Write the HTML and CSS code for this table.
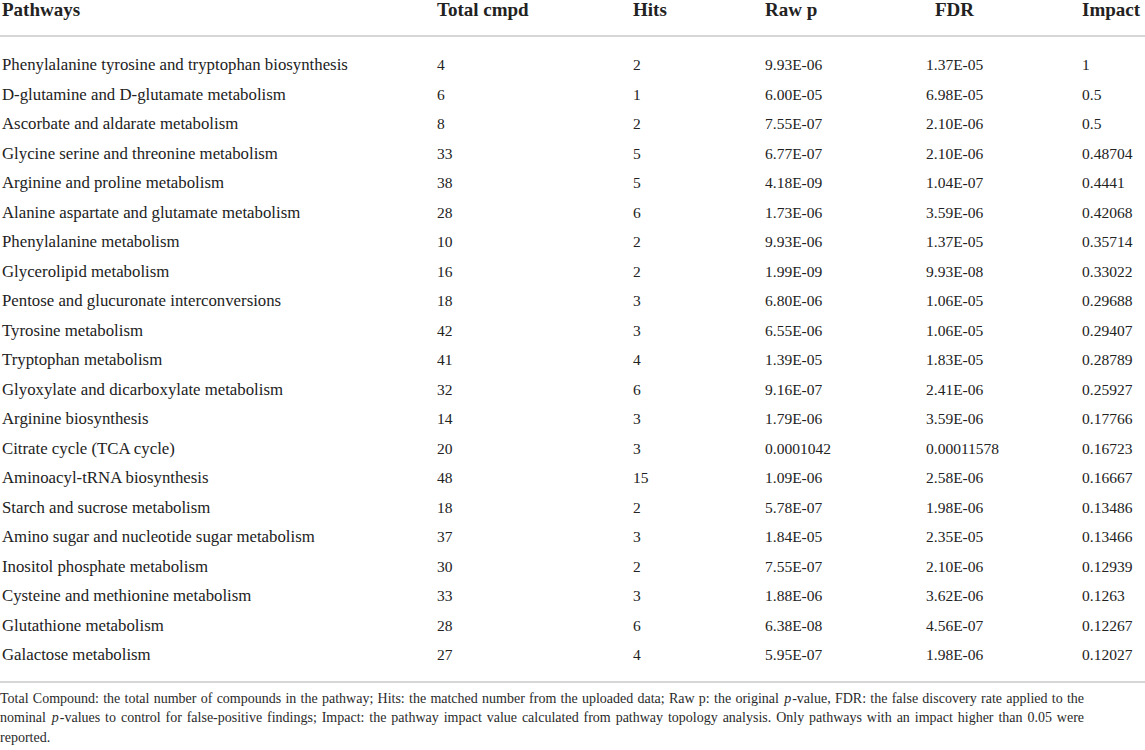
FILE: index.html
```html
<!DOCTYPE html>
<html>
<head>
<meta charset="utf-8">
<link rel="stylesheet" href="styles.css">
</head>
<body>
<div class="wrap">
<table class="tbl">
<colgroup>
<col class="c1"><col class="c2"><col class="c3"><col class="c4"><col class="c5"><col class="c6">
</colgroup>
<thead>
<tr><th>Pathways</th><th>Total cmpd</th><th>Hits</th><th>Raw p</th><th class="fdr">FDR</th><th>Impact</th></tr>
</thead>
<tbody>
<tr class="first"><td>Phenylalanine tyrosine and tryptophan biosynthesis</td><td>4</td><td>2</td><td>9.93E-06</td><td>1.37E-05</td><td>1</td></tr>
<tr><td>D-glutamine and D-glutamate metabolism</td><td>6</td><td>1</td><td>6.00E-05</td><td>6.98E-05</td><td>0.5</td></tr>
<tr><td>Ascorbate and aldarate metabolism</td><td>8</td><td>2</td><td>7.55E-07</td><td>2.10E-06</td><td>0.5</td></tr>
<tr><td>Glycine serine and threonine metabolism</td><td>33</td><td>5</td><td>6.77E-07</td><td>2.10E-06</td><td>0.48704</td></tr>
<tr><td>Arginine and proline metabolism</td><td>38</td><td>5</td><td>4.18E-09</td><td>1.04E-07</td><td>0.4441</td></tr>
<tr><td>Alanine aspartate and glutamate metabolism</td><td>28</td><td>6</td><td>1.73E-06</td><td>3.59E-06</td><td>0.42068</td></tr>
<tr><td>Phenylalanine metabolism</td><td>10</td><td>2</td><td>9.93E-06</td><td>1.37E-05</td><td>0.35714</td></tr>
<tr><td>Glycerolipid metabolism</td><td>16</td><td>2</td><td>1.99E-09</td><td>9.93E-08</td><td>0.33022</td></tr>
<tr><td>Pentose and glucuronate interconversions</td><td>18</td><td>3</td><td>6.80E-06</td><td>1.06E-05</td><td>0.29688</td></tr>
<tr><td>Tyrosine metabolism</td><td>42</td><td>3</td><td>6.55E-06</td><td>1.06E-05</td><td>0.29407</td></tr>
<tr><td>Tryptophan metabolism</td><td>41</td><td>4</td><td>1.39E-05</td><td>1.83E-05</td><td>0.28789</td></tr>
<tr><td>Glyoxylate and dicarboxylate metabolism</td><td>32</td><td>6</td><td>9.16E-07</td><td>2.41E-06</td><td>0.25927</td></tr>
<tr><td>Arginine biosynthesis</td><td>14</td><td>3</td><td>1.79E-06</td><td>3.59E-06</td><td>0.17766</td></tr>
<tr><td>Citrate cycle (TCA cycle)</td><td>20</td><td>3</td><td>0.0001042</td><td>0.00011578</td><td>0.16723</td></tr>
<tr><td>Aminoacyl-tRNA biosynthesis</td><td>48</td><td>15</td><td>1.09E-06</td><td>2.58E-06</td><td>0.16667</td></tr>
<tr><td>Starch and sucrose metabolism</td><td>18</td><td>2</td><td>5.78E-07</td><td>1.98E-06</td><td>0.13486</td></tr>
<tr><td>Amino sugar and nucleotide sugar metabolism</td><td>37</td><td>3</td><td>1.84E-05</td><td>2.35E-05</td><td>0.13466</td></tr>
<tr><td>Inositol phosphate metabolism</td><td>30</td><td>2</td><td>7.55E-07</td><td>2.10E-06</td><td>0.12939</td></tr>
<tr><td>Cysteine and methionine metabolism</td><td>33</td><td>3</td><td>1.88E-06</td><td>3.62E-06</td><td>0.1263</td></tr>
<tr><td>Glutathione metabolism</td><td>28</td><td>6</td><td>6.38E-08</td><td>4.56E-07</td><td>0.12267</td></tr>
<tr class="last"><td>Galactose metabolism</td><td>27</td><td>4</td><td>5.95E-07</td><td>1.98E-06</td><td>0.12027</td></tr>
</tbody>
</table>
<p class="note">Total Compound: the total number of compounds in the pathway; Hits: the matched number from the uploaded data; Raw p: the original <i>p</i>-value, FDR: the false discovery rate applied to the nominal <i>p</i>-values to control for false-positive findings; Impact: the pathway impact value calculated from pathway topology analysis. Only pathways with an impact higher than 0.05 were reported.</p>
</div>
</body>
</html>
```

FILE: styles.css
```css
html, body {
  margin: 0;
  padding: 0;
  background: #ffffff;
}

body {
  font-family: "Liberation Serif", "Times New Roman", serif;
  color: #222222;
  width: 1145px;
  overflow: hidden;
}

.wrap {
  width: 1145px;
}

.tbl {
  width: 1145px;
  border-collapse: collapse;
  table-layout: fixed;
}

.c1 { width: 437px; }
.c2 { width: 196px; }
.c3 { width: 132px; }
.c4 { width: 161px; }
.c5 { width: 156px; }
.c6 { width: 63px; }

.tbl th {
  font-size: 19px;
  font-weight: bold;
  text-align: left;
  padding: 0;
  height: 35px;
  line-height: 20px;
  vertical-align: top;
  border-bottom: 2px solid #d6d6d6;
  white-space: nowrap;
}

.tbl th:first-child,
.tbl td:first-child {
  padding-left: 2px;
}

.tbl td:first-child {
  font-size: 16.8px;
}

.tbl th.fdr {
  padding-left: 9px;
}

.tbl td {
  font-size: 15.5px;
  padding: 0;
  height: 29.5px;
  line-height: 29.5px;
  vertical-align: middle;
  white-space: nowrap;
}

.tbl tr.first td {
  padding-top: 13px;
}

.tbl tr.last td {
  padding-bottom: 11px;
  border-bottom: 2px solid #d6d6d6;
}

.note {
  margin: 0;
  padding-top: 6px;
  width: 1084px;
  font-size: 14px;
  line-height: 19.5px;
  text-align: justify;
  color: #2a2a2a;
}

.note i {
  padding: 0 1px;
}
```
